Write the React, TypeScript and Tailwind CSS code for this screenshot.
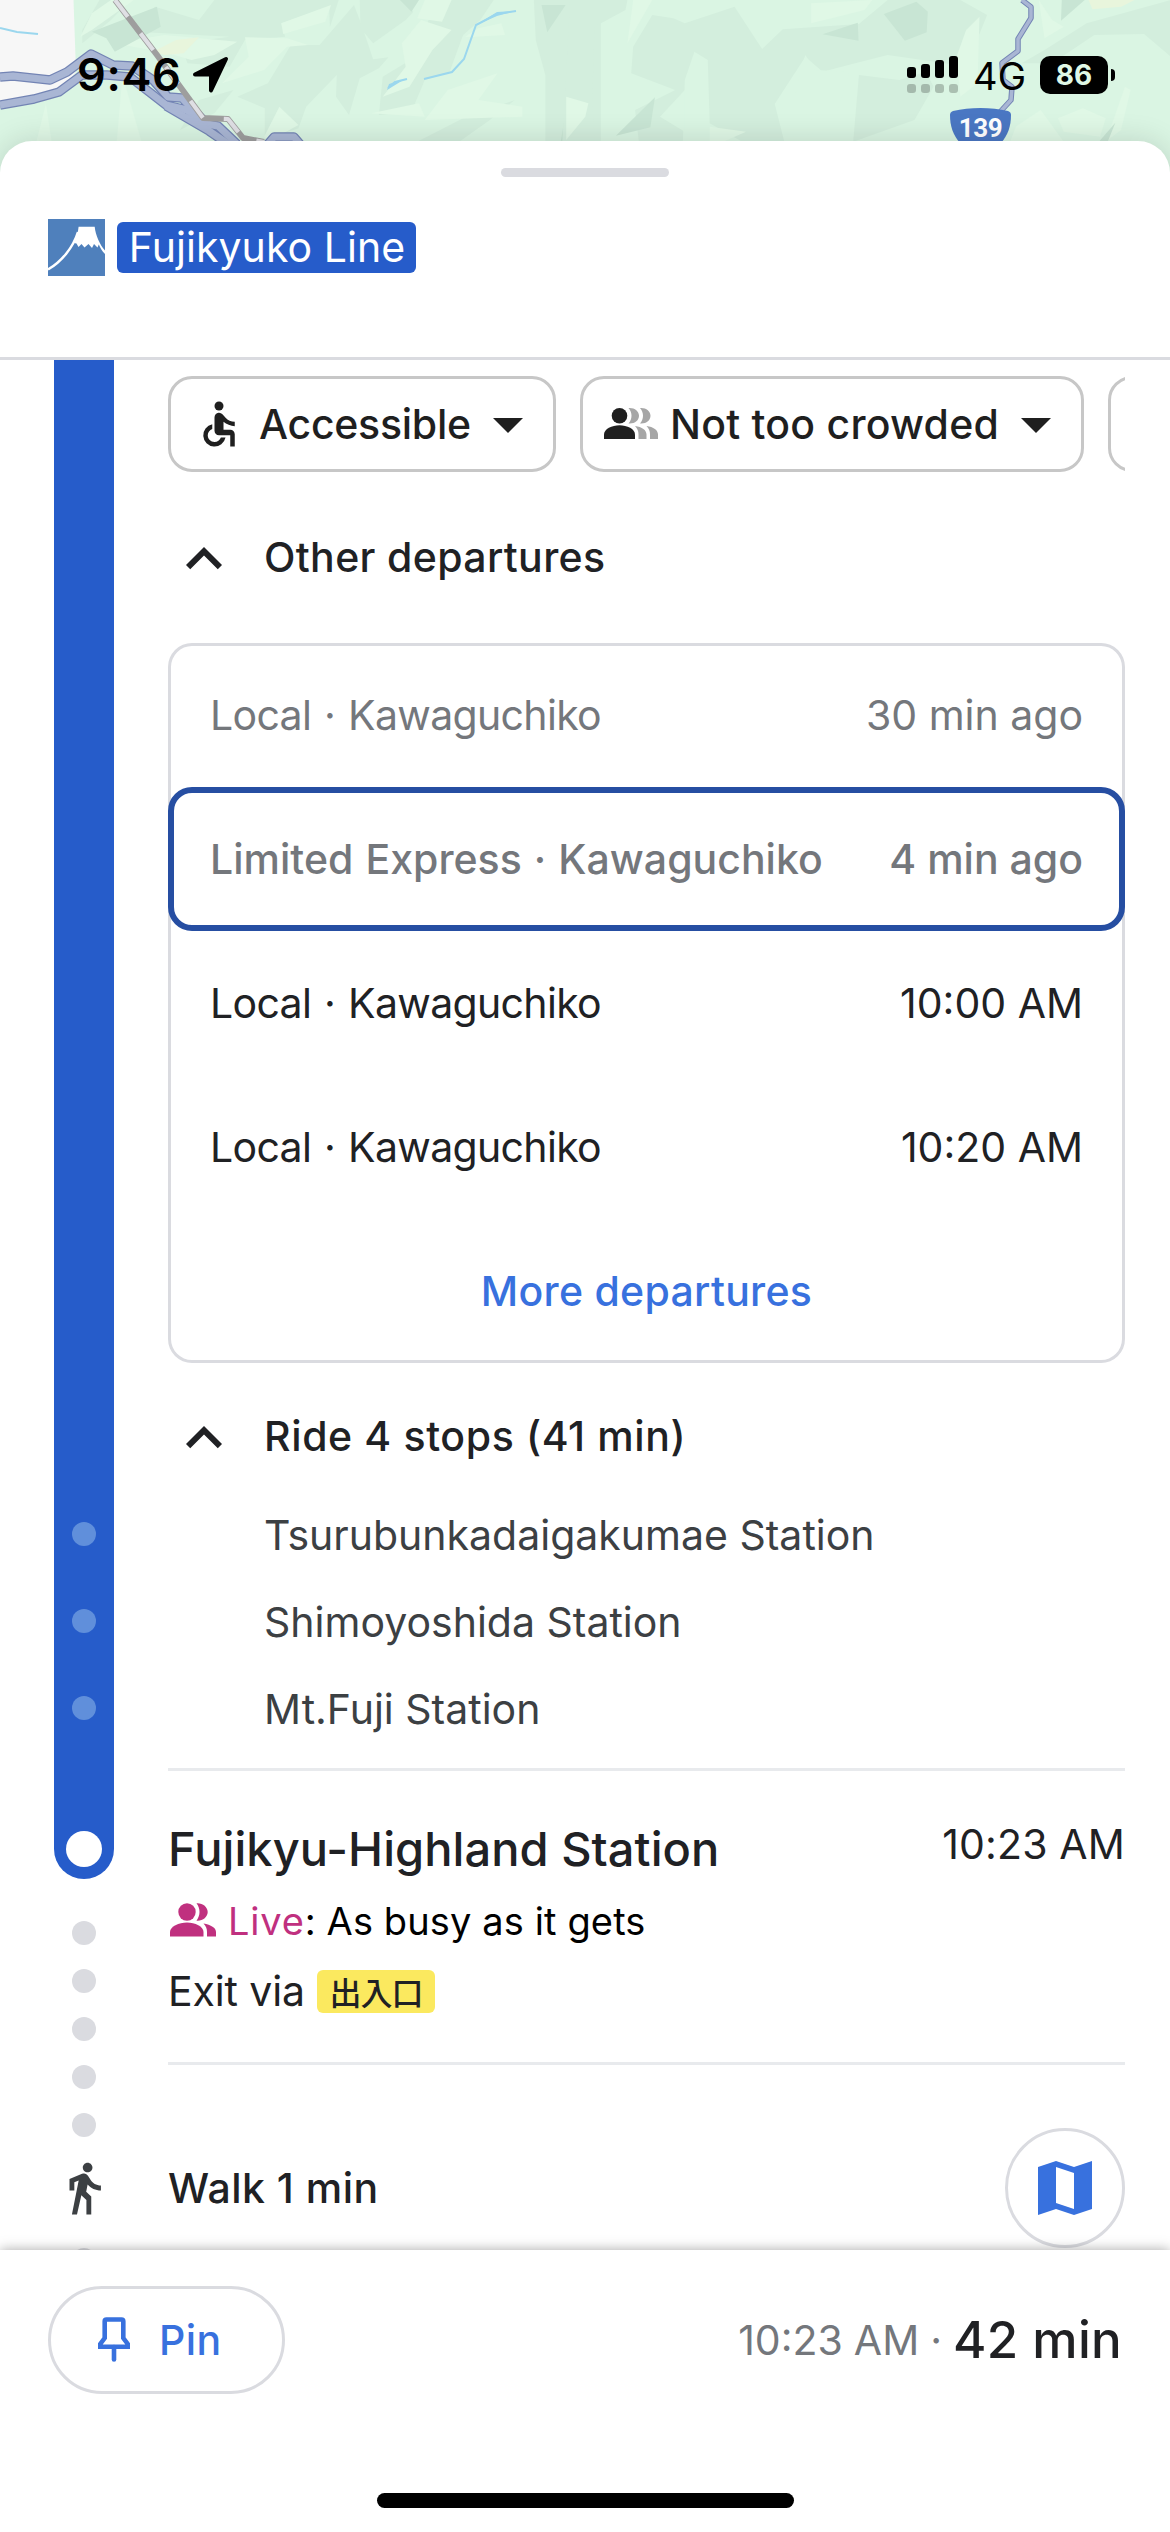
import type { ReactNode } from "react";
import { MdAccessible, MdArrowDropDown } from "react-icons/md";

const departures = [
  { name: "Local · Kawaguchiko", time: "30 min ago", state: "past" },
  { name: "Limited Express · Kawaguchiko", time: "4 min ago", state: "selected" },
  { name: "Local · Kawaguchiko", time: "10:00 AM", state: "next" },
  { name: "Local · Kawaguchiko", time: "10:20 AM", state: "next" },
];

const stops = ["Tsurubunkadaigakumae Station", "Shimoyoshida Station", "Mt.Fuji Station"];

const rowStyles: Record<string, string> = {
  past: "px-[42px] text-[#74777c]",
  selected: "px-9 rounded-[24px] border-[6px] border-[#264ea2] bg-white font-medium text-[#74777c]",
  next: "px-[42px] text-[#202124]",
};

function MapBackground() {
  return (
    <svg className="absolute inset-x-0 top-0" width="1170" height="200" viewBox="0 0 1170 200">
      <rect width="1170" height="200" fill="#daf5e3" />

      {/* Terrain, left half */}
      <g transform="scale(0.3827 0.3333)">
        <g fill="#d3eedd">
          <path d="M350 95L405 20 520 60 560 0H885L862 82 860 20 735 70 745 110 640 120 600 200 490 190 470 130 600 110 430 100z" />
          <path d="M215 130L290 60 340 0H260L215 90z" />
          <path d="M760 135L835 135 925 15 945 75 975 178 1015 172 990 205 940 235 912 345 878 290 880 225 800 320 780 385 692 420V325L620 290 700 250z" />
          <path d="M940 0H1050L1080 35 1060 60 975 130 942 85z" />
          <path d="M1180 0H1290L1255 60 1210 105 1175 215 1110 240 1075 335 990 345 1000 230 1080 175 1120 60z" />
          <path d="M1395 0H1570V430H1425V225L1400 120z" />
          <path d="M1090 425L1210 355 1345 300 1280 360 1200 425z" />
          <path d="M470 390L520 300 610 270 560 340z" />
        </g>
        <g fill="#e0f8e6">
          <path d="M735 70L865 15 850 65 740 102z" />
          <path d="M290 0H350L240 90 210 110 240 40z" />
          <path d="M640 112L750 115 805 135 750 140 690 210 580 250 650 170z" />
          <path d="M1110 0H1180L1155 65 1090 55z" />
          <path d="M1215 110L1250 85 1310 70 1320 105 1240 110z" />
          <path d="M970 340L1095 310 1110 350z" />
          <path d="M1110 360L1170 270 1300 220 1250 300 1365 320 1365 350z" />
          <path d="M690 410L730 320 780 375 700 425z" />
          <path d="M320 225L305 425H335L370 425z" />
          <path d="M120 310L135 425H95z" />
          <path d="M1480 265L1530 190 1535 300z" />
          <path d="M1050 130L1100 60 1180 90 1130 150 1070 260 1000 290 1060 200z" />
          <path d="M300 130L430 105 620 125 560 165 500 180 440 160z" />
        </g>
        <path d="M400 155L460 120 520 112 480 160 430 165z" fill="#e8f5dc" />
        <g fill="#c8e5d4">
          <path d="M240 95L410 20 420 80 300 155 278 115z" />
          <path d="M1045 0H1095L1075 35z" />
          <path d="M1415 15H1478L1430 97z" />
          <path d="M1475 360L1490 425H1465z" />
        </g>
      </g>

      {/* Terrain, right half */}
      <g transform="translate(570 0) scale(0.3827 0.3333)">
        <g fill="#d3eedd">
          <path d="M0 0H150L145 30 64 80 58 300 65 425H-20z" />
          <path d="M165 140L215 45 270 55 300 70 430 20 502 147 556 88 755 72 830 0H1020L1090 45 1060 130 1040 200 980 190 830 165 745 190 660 215 615 170 535 312 560 425H450L365 370 360 180 325 155 300 240 295 425H180L170 330 275 270 160 220z" />
          <path d="M755 225L860 240 930 215 950 260 900 360 740 425z" />
          <path d="M1570 0L1350 70 1240 150 1180 190 1260 190 1370 105 1500 102 1570 170z" />
        </g>
        <g fill="#daf5e3">
          <path d="M550 312L590 275 640 395 590 425z" />
          <path d="M615 165L640 210 730 215 700 330 650 400 590 270z" />
          <path d="M235 350L300 270 300 395z" />
        </g>
        <g fill="#e0f8e6">
          <path d="M165 0H215L150 130z" />
          <path d="M630 10L790 0 770 30 630 70z" />
          <path d="M1035 90L1070 50 1065 250 1020 290 1010 170z" />
          <path d="M1225 0L1260 60 1290 80 1240 115z" />
          <path d="M1275 355L1340 325 1400 355 1385 410 1290 395z" />
          <path d="M1165 380L1230 330 1290 425H1150z" />
          <path d="M-10 290L48 310 40 350-10 420z" />
          <path d="M365 380L460 395 400 425H365z" />
          <path d="M1450 260L1465 270 1440 390 1400 425z" />
        </g>
        <path d="M1355 0H1475L1440 20 1365 28z" fill="#e8f5dc" />
        <g fill="#c8e5d4">
          <path d="M820 42L905 5 935 35 932 97 875 122z" />
          <path d="M660 103L752 68 754 122z" />
          <path d="M222 292L210 382 120 407z" />
          <path d="M1285 0H1345L1283 62z" />
          <path d="M1425 368L1405 425H1382z" />
        </g>
      </g>

      <path d="M0 0H73.5L76 72Q62 94 0 106z" fill="#f7f7f7" />

      {/* Rivers */}
      <path
        d="M0 28L17 32 38 34M388 88L395 82 407 79M424 79L452 72 464 59 476 25 497 14 516 11"
        fill="none"
        stroke="#9bd7ee"
        strokeWidth="2"
      />
      <path d="M476 25L497 12 516 11 497 16zM387 90L389 84 405 79z" fill="#9bd7ee" />

      {/* Expressway, railway and route 139 */}
      <g fill="none" strokeLinejoin="round">
        <g stroke="#7384b4" strokeWidth="9.5">
          <path d="M0 77L13 76 50 80 67 72 91 54 113 65 132 66 153 80 168 97 182 98 207 124 218 126 237 144" />
          <path d="M0 105L34 99 59 92 82 75 107 75 130 77 166 105 187 110 207 128" />
          <path d="M166 106L209 131 228 144M268 144L274 137H294L300 144" />
        </g>
        <g stroke="#a9b6d4" strokeWidth="7">
          <path d="M0 77L13 76 50 80 67 72 91 54 113 65 132 66 153 80 168 97 182 98 207 124 218 126 237 144" />
          <path d="M0 105L34 99 59 92 82 75 107 75 130 77 166 105 187 110 207 128" />
          <path d="M166 106L209 131 228 144M268 144L274 137H294L300 144" />
        </g>
        <path d="M115 0L157 55 203 118 228 119 243 138 264 142" stroke="#9e9e9e" strokeWidth="6" />
        <path
          d="M115 0L157 55 203 118 228 119 243 138 264 142"
          stroke="#dfdfe4"
          strokeWidth="4.2"
          strokeDasharray="21 21"
        />
        <path
          d="M1022 0L1031 7V18L1018 39V51L1002 63 1003 80 1012 87 1011 100 1000 112"
          stroke="#7384b4"
          strokeWidth="5.5"
        />
        <path
          d="M1022 0L1031 7V18L1018 39V51L1002 63 1003 80 1012 87 1011 100 1000 112"
          stroke="#a9b6d4"
          strokeWidth="3.5"
        />
      </g>

      {/* Route shield */}
      <path d="M950 115q0-3 3-4c17-4 38-4 55 0q3 1 3 4c0 11-3 20-10 28h-41c-7-8-10-17-10-28z" fill="#4a77c3" />
      <text
        x="980.5"
        y="137"
        textAnchor="middle"
        fill="#fff"
        fontSize="26"
        fontWeight="700"
        letterSpacing="-0.4"
        className="font-['Roboto',sans-serif]"
      >
        139
      </text>
    </svg>
  );
}

function StatusBar() {
  return (
    <div className="relative flex h-[141px] items-start justify-between pt-[45px] pr-[55px] pl-[77px]">
      <div className="flex h-[60px] items-center">
        <span className="text-[45px] leading-[60px] font-semibold tracking-[0.63px] text-black">9:46</span>
        <svg className="ml-[9px]" width="40" height="40" viewBox="0 0 40 40">
          <path d="M36 4L21 35.5V19.5H5z" fill="#000" stroke="#000" strokeWidth="4" strokeLinejoin="round" />
        </svg>
      </div>
      <div className="flex h-[60px] items-center">
        <svg width="51" height="38" viewBox="0 0 51 38">
          <g fill="#000">
            <rect x="0" y="11" width="9" height="11" rx="3" />
            <rect x="14" y="8" width="9" height="14" rx="3" />
            <rect x="28" y="4" width="9" height="18" rx="3" />
            <rect x="42" y="0" width="9" height="22" rx="3" />
          </g>
          <g fill="#000" fillOpacity="0.22">
            <rect x="0" y="28" width="9" height="9" rx="3" />
            <rect x="14" y="28" width="9" height="9" rx="3" />
            <rect x="28" y="28" width="9" height="9" rx="3" />
            <rect x="42" y="28" width="9" height="9" rx="3" />
          </g>
        </svg>
        <span className="ml-[15px] pt-px text-[38px] leading-[60px] text-black">4G</span>
        <span className="ml-[14px] flex h-[38px] w-[68px] items-center justify-center rounded-[10px] bg-black text-[28px] leading-none font-bold text-[#dff7e5]">
          86
        </span>
        <span className="ml-[3px] h-[12px] w-[4px] rounded-r-full bg-black" />
      </div>
    </div>
  );
}

function SheetHeader() {
  return (
    <header className="flex h-[219px] flex-col border-b-[3px] border-[#dadbe0]">
      <div className="mt-[27px] h-[9px] w-[168px] self-center rounded-full bg-[#dadbe0]" />
      <div className="mt-[42px] flex h-[57px] items-center gap-3 pl-12">
        <svg width="57" height="57" viewBox="0 0 57 57">
          <rect width="57" height="57" fill="#4f80bc" />
          <path d="M0 50.5C13 43 25 29 30 13" fill="none" stroke="#fff" strokeWidth="2.5" />
          <path
            d="M30.6 7.7H46.7C47.5 16 52 26 57 31.5V35C54 32 52 28.5 50.8 25.5L49.5 28.5 46 25 44 29 40.5 25 36.5 28.5 33.5 25 30.5 28 28.5 24.5 26 24C29 18 30 13 30.6 7.7z"
            fill="#fff"
          />
        </svg>
        <span className="flex h-[51px] w-[299px] items-center justify-center rounded-md bg-[#265cca] pl-px text-[41px] leading-none tracking-[0.06px] text-white">
          Fujikyuko Line
        </span>
      </div>
    </header>
  );
}

function CrowdIcon() {
  return (
    <svg width="54" height="54" viewBox="0 0 54 54">
      <g fill="#a6a6a6">
        <path d="M24.5 11c6-.5 10.5 3 10.5 7.8s-4.5 8.3-10.5 7.7c4-4.500 4-11 0-15.5z" />
        <path d="M36 11c6-.5 10.5 3 10.5 7.8s-4.5 8.3-10.5 7.7c4-4.500 4-11 0-15.5z" />
        <path d="M31 29c7 1 11.500 4 11.500 8.500V42h-8v-4.500c0-3.500-1-6-3.500-8.500z" />
        <path d="M42.500 29c7 1 11.500 4 11.500 8.500V42h-8v-4.500c0-3.500-1-6-3.500-8.500z" />
      </g>
      <g fill="#1f1f1f">
        <circle cx="15.5" cy="18.7" r="7.8" />
        <path d="M0 42v-4.500C0 32 8 28.300 15.500 28.300S31 32 31 37.500V42z" />
      </g>
    </svg>
  );
}

function BusyIcon() {
  return (
    <svg width="48" height="48" viewBox="0 0 48 48" fill="#c0307f">
      <circle cx="19" cy="15" r="8.7" />
      <path d="M2 39.500V35c0-5.500 9-9.500 17-9.500s16.500 4 16.500 9.500v4.500z" />
      <path d="M28.500 6.300c6-.5 11.200 3.700 11.200 8.700s-5.200 9.300-11.200 8.700c4-5.500 4-12 0-17.400z" />
      <path d="M35.500 26.500c7.500 1.500 12.500 4 12.500 8.500v4.500h-9V35c0-3.500-1-6-3.500-8.500z" />
    </svg>
  );
}

function WalkIcon() {
  return (
    <svg className="shrink-0" width="58" height="58" viewBox="0 0 24 24" fill="#3c4043">
      <path d="M13.500 5.500c1.100 0 2-.9 2-2s-.9-2-2-2-2 .9-2 2 .9 2 2 2zM9.800 8.900L7 23h2.100l1.800-8 2.100 2v6h2v-7.500l-2.100-2 .6-3C14.800 12 16.800 13 19 13v-2c-1.900 0-3.500-1-4.300-2.400l-1-1.600c-.4-.6-1-1-1.700-1-.3 0-.5.1-.8.1L6 8.300V13h2V9.600l1.800-.7" />
    </svg>
  );
}

function SectionTitle({ children, className }: { children: ReactNode; className: string }) {
  return (
    <div className={`flex h-[72px] items-center gap-6 text-[41px] font-medium text-[#202124] ${className}`}>
      <svg className="mt-[3px] shrink-0" width="72" height="72" viewBox="0 0 24 24" fill="#202124">
        <path d="M12 8l-6 6 1.410 1.410L12 10.830l4.590 4.580L18 14z" />
      </svg>
      <span className="pt-0.5">{children}</span>
    </div>
  );
}

function Rail() {
  return (
    <div className="flex w-[168px] shrink-0 flex-col items-start pl-[54px]">
      <div className="flex h-[1519px] w-[60px] shrink-0 flex-col items-center justify-end rounded-b-full bg-[#265cca] pb-3">
        <div className="flex flex-col gap-[63px]">
          {stops.map((stop) => (
            <span key={stop} className="size-6 rounded-full bg-[#608fdb]" />
          ))}
        </div>
        <span className="mt-[111px] size-9 rounded-full bg-white" />
      </div>
      <div className="mt-[42px] flex w-[60px] flex-col items-center gap-6">
        {[0, 1, 2, 3, 4].map((i) => (
          <span key={i} className="size-6 rounded-full bg-[#dadbe0]" />
        ))}
      </div>
      <div className="mt-[22px] flex w-[60px] flex-col items-center">
        <WalkIcon />
        <span className="mt-[31px] size-6 shrink-0 rounded-full bg-[#dadbe0]" />
      </div>
    </div>
  );
}

export default function App() {
  return (
    <div className="relative flex h-[2532px] w-[1170px] flex-col overflow-hidden bg-white font-['Inter','Noto_Sans_CJK_JP',sans-serif]">
      <MapBackground />
      <StatusBar />

      <div className="relative flex grow flex-col rounded-t-[32px] bg-white shadow-[0_0_30px_rgba(0,0,0,0.14)]">
        <SheetHeader />

        <main className="flex h-[1890px] overflow-hidden">
          <Rail />

          <div className="flex w-[957px] flex-col">
            {/* Filters */}
            <div className="mt-4 flex h-24 shrink-0 gap-6 overflow-hidden text-[41px] font-medium text-[#1f1f1f]">
              <button className="flex w-[388px] shrink-0 items-center rounded-[24px] border-[3px] border-[#c7c7c7] pr-[9px] pl-[21px]">
                <MdAccessible className="shrink-0" size={54} />
                <span className="ml-[13px] pt-0.5 tracking-[-0.26px]">Accessible</span>
                <MdArrowDropDown className="ml-auto shrink-0" size={72} />
              </button>
              <button className="flex w-[504px] shrink-0 items-center rounded-[24px] border-[3px] border-[#c7c7c7] pr-[9px] pl-[21px]">
                <CrowdIcon />
                <span className="ml-3 pt-0.5 tracking-[0.23px] whitespace-nowrap">Not too crowded</span>
                <MdArrowDropDown className="ml-auto shrink-0" size={72} />
              </button>
              <button className="w-[300px] shrink-0 rounded-[24px] border-[3px] border-[#c7c7c7]" />
            </div>

            <SectionTitle className="mt-[49px] tracking-[0.35px]">Other departures</SectionTitle>

            {/* Departures */}
            <div className="mt-[50px] flex flex-col rounded-[24px] text-[41px] ring-3 ring-[#dadbe0] ring-inset">
              {departures.map((d, i) => (
                <div key={i} className={`flex h-36 items-center justify-between pt-0.5 ${rowStyles[d.state]}`}>
                  <span
                    className={
                      d.state === "selected"
                        ? "tracking-[0.02px] [word-spacing:1.1px]"
                        : "tracking-[-0.67px] [word-spacing:2px]"
                    }
                  >
                    {d.name}
                  </span>
                  <span>{d.time}</span>
                </div>
              ))}
              <button className="h-36 pt-0.5 text-center font-medium tracking-[0.28px] text-[#3871de]">
                More departures
              </button>
            </div>

            <SectionTitle className="mt-[37px] tracking-[0.62px]">Ride 4 stops (41 min)</SectionTitle>

            <ul className="mt-5 pl-24 text-[41px] leading-[87px] text-[#3c4043]">
              {stops.map((stop) => (
                <li key={stop}>{stop}</li>
              ))}
            </ul>

            <hr className="mt-[15px] border-t-[3px] border-[#e8eaed]" />

            {/* Arrival station */}
            <div className="mt-12 flex h-[60px] justify-between text-[#202124]">
              <h2 className="text-[47px] leading-[60px] font-medium tracking-[0.05px]">Fujikyu-Highland Station</h2>
              <span className="text-[41px] leading-[51px] tracking-[0.15px]">10:23 AM</span>
            </div>
            <div className="mt-[18px] flex h-12 items-center text-[38px] text-black">
              <BusyIcon />
              <span className="ml-3 tracking-[0.8px] text-[#c0307f]">Live</span>
              <span className="tracking-[0.12px]">: As busy as it gets</span>
            </div>
            <div className="mt-[22px] flex h-12 items-center gap-3 text-[41px] text-[#202124]">
              <span className="pt-0.5 tracking-[-0.12px]">Exit via</span>
              <span className="flex h-[43px] w-[118px] items-center justify-center rounded-md bg-[#fbe95f] pb-px font-['Noto_Sans_CJK_JP',sans-serif] text-[32px] leading-none font-medium tracking-[-1px]">
                出入口
              </span>
            </div>

            <hr className="mt-[47px] border-t-[3px] border-[#e8eaed]" />

            <div className="mt-[63px] flex h-[120px] shrink-0 items-center justify-between">
              <span className="pt-0.5 text-[41px] font-medium tracking-[0.49px] text-[#202124]">Walk 1 min</span>
              <button className="flex size-[120px] items-center justify-center rounded-full border-[3px] border-[#dadbe0]">
                <svg width="54" height="54" viewBox="0 0 54 54" fill="#3871de" fillRule="evenodd">
                  <path d="M0 6L18 0 36 6 54 0V48L36 54 18 48 0 54zM18 6V42L36 48V12z" />
                </svg>
              </button>
            </div>
          </div>
        </main>

        <footer className="relative flex h-[282px] flex-col items-center bg-white shadow-[0_0_12px_rgba(0,0,0,0.35)]">
          <div className="mt-9 flex w-full items-center justify-between px-12">
            <button className="flex h-[108px] w-[237px] items-center rounded-full border-[3px] border-[#dadbe0] pl-[39px] text-[41px] font-medium tracking-[0.43px] text-[#3871de]">
              <svg width="48" height="54" viewBox="0 0 48 54" fill="none" stroke="#3871de" strokeWidth="4.6">
                <path d="M16.500 6.500h15c1 0 1.800.8 1.800 1.800V25l4.400 6v2.800H10.300V31l4.400-6V8.300c0-1 .8-1.800 1.800-1.800z" />
                <path d="M24 34v12.500" strokeLinecap="round" />
              </svg>
              <span className="ml-[21px] pt-0.5">Pin</span>
            </button>
            <div className="flex items-center">
              <span className="pt-0.5 text-[41px] text-[#74777c] [word-spacing:-0.5px]">10:23 AM ·</span>
              <span className="ml-[11px] text-[51px] font-medium tracking-[0.27px] text-[#202124]">42 min</span>
            </div>
          </div>
          <div className="mt-[99px] h-[15px] w-[417px] rounded-full bg-black" />
        </footer>
      </div>
    </div>
  );
}
